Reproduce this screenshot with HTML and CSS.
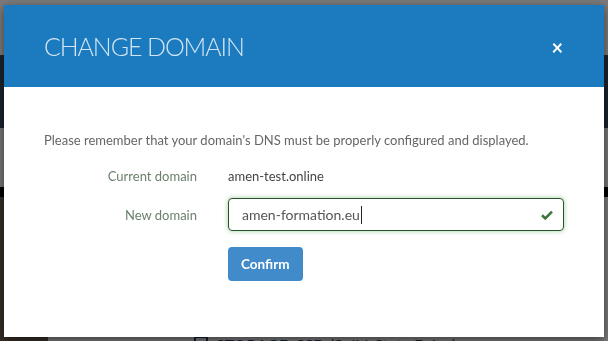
FILE: index.html
```html
<!DOCTYPE html>
<html lang="en">
<head>
    <meta charset="UTF-8">
    <meta name="viewport" content="width=device-width, initial-scale=1.0">
    <title>Change domain</title>
    <link rel="stylesheet" href="styles.css">
</head>
<body>
    <!-- Page behind the modal -->
    <div class="page">
        <div class="page-top"></div>
        <div class="page-nav"></div>
        <div class="page-gap"></div>
        <div class="page-strip"></div>
        <div class="page-content">
            <div class="photo"></div>
            <div class="spec">
                <span class="spec-icon"></span>
                <span class="spec-text">STORAGE: SSD (Solid-State Drive)</span>
            </div>
        </div>
    </div>

    <div class="backdrop"></div>

    <div class="modal">
        <div class="modal-header">
            <h2 class="modal-title">CHANGE DOMAIN</h2>
            <span class="close">&times;</span>
        </div>
        <div class="modal-body">
            <p class="notice">Please remember that your domain's DNS must be properly configured and displayed.</p>
            <div class="form">
                <label class="form-label">Current domain</label>
                <div class="form-value">amen-test.online</div>

                <label class="form-label">New domain</label>
                <div class="input-wrap">
                    <div class="input">amen-formation.eu<span class="caret"></span></div>
                    <svg class="check" width="12" height="10" viewBox="0 0 12 10">
                        <path d="M1 5.2 L4.3 8.4 L11 1.6" fill="none" stroke="#3c763d" stroke-width="2.6"/>
                    </svg>
                </div>

                <div></div>
                <div class="actions"><button class="btn">Confirm</button></div>
            </div>
        </div>
    </div>
</body>
</html>
```

FILE: styles.css
```css
* {
    box-sizing: border-box;
}

body {
    margin: 0;
    width: 608px;
    height: 341px;
    overflow: hidden;
    font-family: Lato, "Open Sans", sans-serif;
}

.page-top {
    height: 55px;
    background-color: #f4f4f4;
}

.page-nav {
    height: 73px;
    background-color: #34475a;
}

.page-gap {
    height: 59px;
    background-color: #ececec;
}

.page-strip {
    height: 10px;
    background-color: #000;
}

.page-content {
    display: flex;
    height: 144px;
    background-color: #f2f2f2;
}

.photo {
    width: 48px;
    background-color: #6b5a4e;
}

.spec {
    display: flex;
    align-items: flex-end;
    gap: 8px;
    padding-left: 146px;
    height: 144px;
}

.spec-icon {
    width: 14px;
    height: 12px;
    border: 2px solid #1d3f66;
    border-radius: 2px;
    margin-bottom: -7px;
}

.spec-text {
    font-size: 16px;
    line-height: 16px;
    color: #1d3f66;
    margin-bottom: -12px;
}

.backdrop {
    position: fixed;
    inset: 0;
    background-color: rgba(0, 0, 0, 0.5);
}

.modal {
    position: absolute;
    top: 5px;
    left: 4px;
    width: 600px;
    height: 332px;
    background-color: #fff;
    box-shadow: 0 3px 9px rgba(0, 0, 0, 0.5);
}

.modal-header {
    display: flex;
    align-items: center;
    justify-content: space-between;
    height: 82px;
    padding: 0 41px 0 40px;
    background-color: #1c7bbe;
}

.modal-title {
    margin: 0;
    font-size: 25px;
    font-weight: 300;
    color: #d3e6f5;
    letter-spacing: -1.1px;
}

.close {
    font-size: 20px;
    font-weight: bold;
    color: #fff;
    line-height: 1;
    margin-top: 2px;
}

.modal-body {
    padding: 45px 40px 0;
}

.notice {
    margin: 0 0 20px;
    font-size: 13px;
    color: #666;
}

.form {
    display: grid;
    grid-template-columns: 153px 336px;
    column-gap: 31px;
    row-gap: 14px;
    align-items: center;
}

.form-label {
    text-align: right;
    font-size: 13px;
    color: #6a806b;
}

.form-value {
    font-size: 13px;
    color: #444;
}

.input-wrap {
    position: relative;
}

.input {
    height: 33px;
    padding: 0 13px;
    display: flex;
    align-items: center;
    font-size: 14px;
    color: #555;
    border: 1px solid #2b542c;
    border-radius: 4px;
    box-shadow: 0 0 5px #9ccf9c;
}

.caret {
    width: 1px;
    height: 18px;
    margin-left: 1px;
    background-color: #222;
}

.check {
    position: absolute;
    right: 11px;
    top: 12px;
}

.actions {
    padding-top: 2px;
}

.btn {
    height: 34px;
    padding: 0 13px;
    font-family: inherit;
    font-size: 13.5px;
    font-weight: bold;
    color: #fff;
    background-color: #428bca;
    border: none;
    border-radius: 4px;
}
```
